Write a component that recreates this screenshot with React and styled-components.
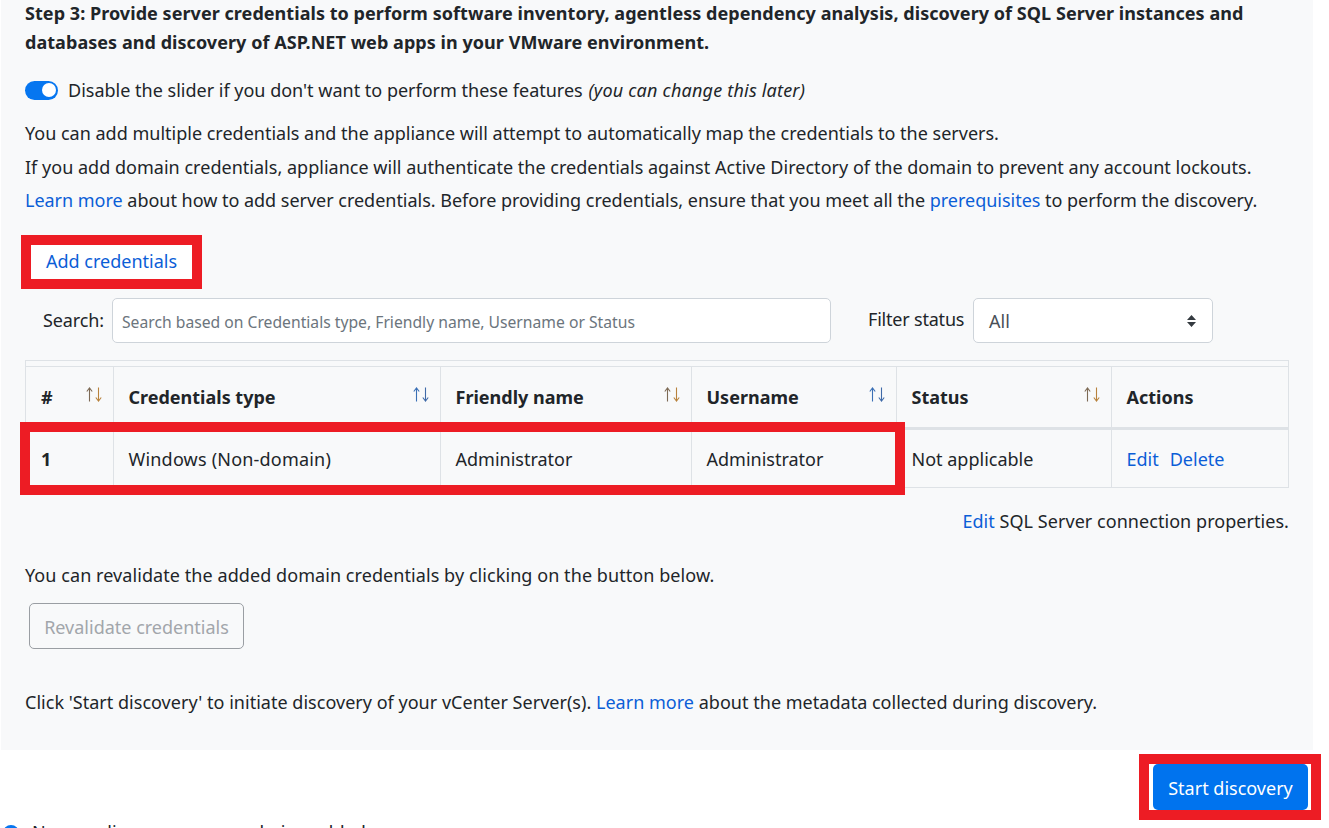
import React from 'react'
import styled, { createGlobalStyle } from 'styled-components'

const red = '#ed1c24'
const link = '#0b5ed7'
const line = '#dee2e6'

const GlobalStyle = createGlobalStyle`
  html, body {
    margin: 0;
    height: 100%;
    overflow: hidden;
    background: #fff;
  }
  body {
    font-family: "Noto Sans", "Open Sans", sans-serif;
    font-size: 18px;
    color: #212529;
  }
  * { box-sizing: border-box; }
`

const Panel = styled.section`
  width: 1312px;
  margin-left: 1px;
  padding: 0 24px 36px;
  background: #f8f9fa;
`
const Heading = styled.h2`
  margin: -1px 0 0;
  font-size: 18px;
  font-weight: 700;
  line-height: 29px;
  letter-spacing: 0.05px;
`
const ToggleRow = styled.div`
  display: flex;
  align-items: center;
  gap: 10px;
  height: 20px;
  margin-top: 23px;
`
const Toggle = styled.span`
  display: flex;
  justify-content: flex-end;
  align-items: center;
  width: 33px;
  height: 19px;
  padding-right: 2px;
  border-radius: 10px;
  background: #0676f0;
  &::after {
    content: '';
    width: 14px;
    height: 14px;
    border-radius: 50%;
    background: #fff;
  }
`
const Hint = styled.em`
  margin-left: 1px;
  letter-spacing: 0.2px;
`
const Notes = styled.div`
  margin-top: 17px;
  line-height: 33.5px;
`
const Note = styled.div`
  letter-spacing: ${props => props.spacing || 0}px;
`
const Text = styled.p`
  margin: ${props => props.top || 0}px 0 0;
  line-height: 24px;
  text-align: ${props => props.align || 'left'};
  letter-spacing: ${props => props.spacing || 0}px;
`
const Link = styled.a`
  color: ${link};
  text-decoration: none;
`
const AddButton = styled.button`
  display: block;
  width: 181px;
  height: 54px;
  margin: 17px 0 0 -4px;
  padding: 0 0 2px;
  border: 10px solid ${red};
  background: #fff;
  color: ${link};
  font: inherit;
`
const SearchRow = styled.div`
  display: flex;
  align-items: center;
  margin-top: 9px;
  padding-left: 18px;
`
const SearchLabel = styled.label`
  width: 69px;
  flex: none;
  letter-spacing: -0.1px;
`
const Field = styled.div`
  display: flex;
  align-items: center;
  justify-content: space-between;
  flex: none;
  width: ${props => props.width}px;
  height: 45px;
  padding: ${props => props.nudge || 0}px ${props => props.pad}px 0;
  border: 1px solid #ced4da;
  border-radius: 5px;
  background: #fff;
  color: ${props => props.color};
  font-size: ${props => props.size || 18}px;
`
const FilterLabel = styled.label`
  flex: none;
  width: 96px;
  margin: -2px 9px 0 37px;
  letter-spacing: -0.2px;
  white-space: nowrap;
`
const TableWrap = styled.div`
  position: relative;
  margin-top: 17px;
  padding-top: 5px;
  border: 1px solid ${line};
  border-bottom-width: 0;
`
const Table = styled.table`
  width: 100%;
  table-layout: fixed;
  border-collapse: collapse;
`
const Th = styled.th`
  height: 62px;
  padding: 0 10px 0 15px;
  border-top: 1px solid ${line};
  border-bottom: 3px solid ${line};
  border-left: 1px solid ${line};
  text-align: left;
  &:first-child { border-left: 0; }
`
const ThInner = styled.div`
  display: flex;
  justify-content: space-between;
  align-items: flex-start;
`
const Td = styled.td`
  height: 59px;
  padding: 2px 15px 0;
  border-bottom: 1px solid ${line};
  border-left: 1px solid ${line};
  font-weight: ${props => (props.strong ? 700 : 400)};
  letter-spacing: ${props => props.spacing || 0}px;
  &:first-child { border-left: 0; }
`
const Actions = styled.div`
  display: flex;
  gap: 11px;
`
const RowMark = styled.div`
  position: absolute;
  left: -6px;
  top: 61px;
  width: 885px;
  height: 73px;
  border: 10px solid ${red};
  pointer-events: none;
`
const RevalidateButton = styled.button`
  display: block;
  width: 215px;
  height: 46px;
  margin: 16px 0 0 4px;
  padding: 3px 0 0;
  border: 1px solid #9a9ea3;
  border-radius: 5px;
  background: transparent;
  color: #a2a6ab;
  font: inherit;
`
const Footer = styled.div`
  display: flex;
  justify-content: flex-end;
  margin: 4px 8px 0 0;
`
const StartFrame = styled.div`
  width: 182px;
  height: 66px;
  padding: 0 3px 0 4px;
  border: 10px solid ${red};
  background: #fff;
`
const StartButton = styled.button`
  width: 100%;
  height: 100%;
  padding: 3px 0 0;
  border: 0;
  border-radius: 5px;
  background: #0073ee;
  color: #fff;
  font: inherit;
`
const Notice = styled.div`
  display: flex;
  gap: 13px;
  margin: 5px 0 0 3px;
  line-height: 14px;
`

const tones = {
  brown: ['#7d6a55', '#b8823c'],
  blue: ['#3a6fb5', '#3f6aa8'],
}

const SortIcon = ({ tone }) => (
  <svg width="18" height="15" viewBox="0 0 18 15" fill="none" strokeWidth="1.1" style={{ flex: 'none', marginTop: 2 }}>
    <path d="M4.5 14.5V1.5M1.8 4.5 4.5 1l2.7 3.5" stroke={tones[tone][0]} />
    <path d="M13.5 .5v13M10.8 10.5l2.7 3.5 2.7-3.5" stroke={tones[tone][1]} />
  </svg>
)

const InfoIcon = () => (
  <svg width="16" height="16" viewBox="0 0 16 16" style={{ flex: 'none' }}>
    <circle cx="8" cy="8" r="8" fill="#0676f0" />
    <path d="M8 7v5M8 4v1.5" stroke="#fff" strokeWidth="1.6" />
  </svg>
)

const SelectArrows = () => (
  <svg width="11" height="14" viewBox="0 0 11 14" fill="#343a40">
    <path d="M5.5 1 10 6H1zM5.5 13 1 8h9z" />
  </svg>
)

const columns = [
  { label: '#', width: 87, tone: 'brown' },
  { label: 'Credentials type', width: 327, tone: 'blue' },
  { label: 'Friendly name', width: 251, tone: 'brown' },
  { label: 'Username', width: 205, tone: 'blue' },
  { label: 'Status', width: 215, tone: 'brown' },
  { label: 'Actions', width: 177 },
]

export default function App() {
  return (
    <>
      <GlobalStyle />
      <Panel>
        <Heading>
          Step 3: Provide server credentials to perform software inventory, agentless dependency analysis, discovery of SQL Server instances and databases and discovery of ASP.NET web apps in your VMware environment.
        </Heading>
        <ToggleRow>
          <Toggle />
          <span>
            Disable the slider if you don't want to perform these features <Hint>(you can change this later)</Hint>
          </span>
        </ToggleRow>
        <Notes>
          <Note>You can add multiple credentials and the appliance will attempt to automatically map the credentials to the servers.</Note>
          <Note spacing={0.02}>If you add domain credentials, appliance will authenticate the credentials against Active Directory of the domain to prevent any account lockouts.</Note>
          <Note spacing={-0.02}>
            <Link>Learn more</Link> about how to add server credentials. Before providing credentials, ensure that you meet all the <Link>prerequisites</Link> to perform the discovery.
          </Note>
        </Notes>
        <AddButton>Add credentials</AddButton>
        <SearchRow>
          <SearchLabel>Search:</SearchLabel>
          <Field width={719} pad={9} nudge={4} color="#6c757d" size={15.7}>
            Search based on Credentials type, Friendly name, Username or Status
          </Field>
          <FilterLabel>Filter status</FilterLabel>
          <Field width={240} pad={15} nudge={2} color="#495057">
            All
            <SelectArrows />
          </Field>
        </SearchRow>
        <TableWrap>
          <Table>
            <colgroup>
              {columns.map(col => (
                <col key={col.label} width={col.width} />
              ))}
            </colgroup>
            <thead>
              <tr>
                {columns.map(col => (
                  <Th key={col.label}>
                    <ThInner>
                      {col.label}
                      {col.tone && <SortIcon tone={col.tone} />}
                    </ThInner>
                  </Th>
                ))}
              </tr>
            </thead>
            <tbody>
              <tr>
                <Td strong>1</Td>
                <Td spacing={0.2}>Windows (Non-domain)</Td>
                <Td>Administrator</Td>
                <Td>Administrator</Td>
                <Td>Not applicable</Td>
                <Td>
                  <Actions>
                    <Link>Edit</Link>
                    <Link>Delete</Link>
                  </Actions>
                </Td>
              </tr>
            </tbody>
          </Table>
          <RowMark />
        </TableWrap>
        <Text top={21} align="right" spacing={0.05}>
          <Link>Edit</Link> SQL Server connection properties.
        </Text>
        <Text top={30} spacing={0.07}>You can revalidate the added domain credentials by clicking on the button below.</Text>
        <RevalidateButton disabled>Revalidate credentials</RevalidateButton>
        <Text top={41} spacing={0.02}>
          Click 'Start discovery' to initiate discovery of your vCenter Server(s). <Link>Learn more</Link> about the metadata collected during discovery.
        </Text>
      </Panel>
      <Footer>
        <StartFrame>
          <StartButton>Start discovery</StartButton>
        </StartFrame>
      </Footer>
      <Notice>
        <InfoIcon />
        <span>Now appliance servers are being added</span>
      </Notice>
    </>
  )
}
